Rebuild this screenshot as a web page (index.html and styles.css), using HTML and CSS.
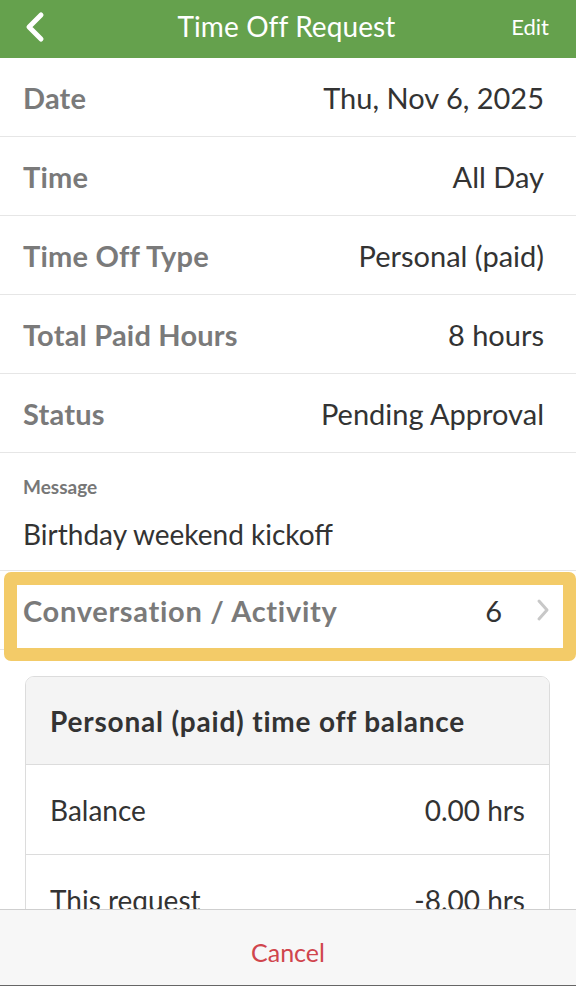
FILE: index.html
```html
<!DOCTYPE html>
<html>
<head>
<meta charset="utf-8">
<link rel="stylesheet" href="styles.css">
</head>
<body>
<div class="app">
  <header class="nav">
    <span class="back">
      <svg width="22" height="32" viewBox="0 0 22 32"><path d="M17 4 L5 16 L17 28" fill="none" stroke="#fff" stroke-width="5" stroke-linecap="round" stroke-linejoin="round"/></svg>
    </span>
    <h1 class="title">Time Off Request</h1>
    <span class="edit">Edit</span>
  </header>
  <main class="content">
    <div class="row"><span class="label">Date</span><span class="value">Thu, Nov 6, 2025</span></div>
    <div class="row"><span class="label">Time</span><span class="value">All Day</span></div>
    <div class="row"><span class="label">Time Off Type</span><span class="value">Personal (paid)</span></div>
    <div class="row"><span class="label">Total Paid Hours</span><span class="value">8 hours</span></div>
    <div class="row"><span class="label">Status</span><span class="value">Pending Approval</span></div>
    <div class="message">
      <div class="msg-label">Message</div>
      <div class="msg-text">Birthday weekend kickoff</div>
    </div>
    <div class="row conv">
      <span class="label conv-label">Conversation / Activity</span>
      <span class="conv-right"><span class="value">6</span>
        <svg class="chev" width="14" height="24" viewBox="0 0 14 24"><path d="M3 3 L11 12 L3 21" fill="none" stroke="#c8c8c8" stroke-width="3" stroke-linecap="round" stroke-linejoin="round"/></svg>
      </span>
      <div class="highlight"></div>
    </div>
    <section class="card">
      <div class="card-head">Personal (paid) time off balance</div>
      <div class="card-row"><span>Balance</span><span>0.00 hrs</span></div>
      <div class="card-row"><span>This request</span><span>-8.00 hrs</span></div>
    </section>
  </main>
  <footer class="footer"><span class="cancel">Cancel</span></footer>
</div>
</body>
</html>
```
FILE: styles.css
```css
* { box-sizing: border-box; margin: 0; padding: 0; }
html, body { width: 576px; height: 986px; overflow: hidden; }
body { font-family: Lato, "Open Sans", sans-serif; background: #fff; color: #333; }
.app { position: relative; width: 576px; height: 986px; overflow: hidden; }
.nav {
  height: 58px; background: #65a14d; display: flex; align-items: center;
  justify-content: space-between; padding: 0 27px 6px 24px; color: #fff;
}
.back { width: 40px; display: flex; align-items: center; margin-top: 2px; }
.title { font-weight: 400; font-size: 28px; letter-spacing: 0.1px; }
.edit { font-size: 22px; width: 40px; text-align: right; }
.row {
  height: 79px; display: flex; align-items: center; justify-content: space-between;
  padding: 0 32px 0 23px; border-bottom: 1px solid #e6e6e6;
}
.label { font-size: 29px; font-weight: 700; color: #7a7a7a; letter-spacing: 0.2px; }
.conv-label { letter-spacing: 0.7px; }
.value { font-size: 29px; color: #333; }
.message { height: 118px; padding: 24px 23px 0; border-bottom: 1px solid #e6e6e6; }
.msg-label { font-size: 19px; color: #777; font-weight: 700; line-height: 20px; }
.msg-text { font-size: 28px; margin-top: 19px; line-height: 36px; }
.conv { position: relative; }
.conv-right { display: flex; align-items: center; gap: 34px; margin-right: -6px; }
.highlight {
  position: absolute; left: 4px; right: 0; top: 1px; height: 89px;
  border: 13px solid #f3cb68; border-radius: 7px;
}
.card {
  margin: 26px 26px 0 25px; border: 1px solid #dcdcdc; border-radius: 9px; overflow: hidden;
}
.card-head {
  height: 88px; background: #f4f4f4; display: flex; align-items: center;
  padding: 0 24px; font-size: 28px; font-weight: 700; color: #333; letter-spacing: 0.8px;
  border-bottom: 1px solid #dcdcdc;
}
.card-row {
  height: 90px; display: flex; align-items: center; justify-content: space-between;
  padding: 0 24px; font-size: 28px; color: #333; border-bottom: 1px solid #dcdcdc;
}
.footer {
  position: absolute; left: 0; right: 0; bottom: 0; height: 77px; background: #f7f7f7;
  border-top: 1px solid #cfcfcf; border-bottom: 1px solid #666;
  display: flex; align-items: center; justify-content: center;
}
.cancel { font-size: 25px; color: #d0454d; margin-top: 8px; }
```
